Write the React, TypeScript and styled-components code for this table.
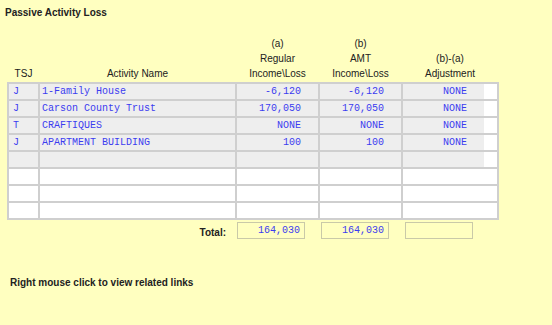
import React from "react";
import styled, { createGlobalStyle } from "styled-components";

const Global = createGlobalStyle`
  html, body { margin: 0; padding: 0; background: #ffffc0; }
  body { font-family: "Liberation Sans", Arial, sans-serif; font-size: 10px; color: #222; }
`;

const Page = styled.div`
  width: 552px;
  height: 325px;
  background: #ffffc0;
  box-sizing: border-box;
  padding: 7px 0 0 0;
  display: flex;
  flex-direction: column;
`;

const Title = styled.div`
  font-weight: bold;
  font-size: 10px;
  line-height: 12px;
  padding-left: 5px;
  height: 29px;
`;

const COLS = "29px 195px 81px 81px 94px";

const HeaderRow = styled.div`
  display: grid;
  grid-template-columns: ${COLS};
  column-gap: 2px;
  margin: 0 0 1px 7px;
  padding: 0 2px;
  align-items: end;
`;

const HeaderCell = styled.div`
  text-align: center;
  line-height: 15px;
  color: #222;
`;

const Table = styled.div`
  display: grid;
  grid-template-columns: ${COLS};
  gap: 2px;
  padding: 2px;
  margin-left: 7px;
  width: max-content;
  background: #cfcfcf;
`;

const Cell = styled.div<{ $filled: boolean; $align?: "left" | "right" | "center"; $pad?: number }>`
  height: 15px;
  line-height: 15px;
  background: ${(p) => (p.$filled ? "#eeeeee" : "#ffffff")};
  font-family: "Liberation Mono", "Courier New", monospace;
  font-size: 10px;
  color: #3c3cf0;
  text-align: ${(p) => p.$align ?? "left"};
  padding: ${(p) => (p.$align === "right" ? `0 ${p.$pad ?? 17}px 0 0` : `0 0 0 ${p.$pad ?? 2}px`)};
  box-sizing: border-box;
  white-space: pre;
  overflow: hidden;
`;

const AdjCell = styled.div`
  height: 15px;
  background: #ffffff;
  display: flex;
`;

const AdjInput = styled.div<{ $filled: boolean }>`
  width: 81px;
  height: 15px;
  line-height: 15px;
  background: ${(p) => (p.$filled ? "#eeeeee" : "#ffffff")};
  font-family: "Liberation Mono", "Courier New", monospace;
  font-size: 10px;
  color: #3c3cf0;
  text-align: right;
  padding-right: 17px;
  box-sizing: border-box;
`;

const TotalRow = styled.div`
  display: grid;
  grid-template-columns: ${COLS};
  column-gap: 2px;
  margin: 2px 0 0 7px;
  padding: 0 2px;
  align-items: center;
`;

const TotalLabel = styled.div`
  grid-column: 1 / span 2;
  text-align: right;
  padding-right: 9px;
  font-weight: bold;
  font-size: 10px;
  padding-top: 3px;
`;

const TotalBox = styled.div<{ $offset: number }>`
  width: 68px;
  height: 17px;
  margin-left: ${(p) => p.$offset}px;
  box-sizing: border-box;
  border: 1px solid #c9c9a8;
  font-family: "Liberation Mono", "Courier New", monospace;
  font-size: 10px;
  color: #3c3cf0;
  text-align: right;
  line-height: 15px;
  padding-right: 4px;
`;

const Footer = styled.div`
  font-weight: bold;
  font-size: 10px;
  padding-left: 10px;
  margin-top: 38px;
  line-height: 12px;
`;

type Row = { tsj: string; name: string; reg: string; amt: string; adj: string } | null;

const rows: { data: Row; filled: boolean }[] = [
  { data: { tsj: "J", name: "1-Family House", reg: "-6,120", amt: "-6,120", adj: "NONE" }, filled: true },
  { data: { tsj: "J", name: "Carson County Trust", reg: "170,050", amt: "170,050", adj: "NONE" }, filled: true },
  { data: { tsj: "T", name: "CRAFTIQUES", reg: "NONE", amt: "NONE", adj: "NONE" }, filled: true },
  { data: { tsj: "J", name: "APARTMENT BUILDING", reg: "100", amt: "100", adj: "NONE" }, filled: true },
  { data: null, filled: true },
  { data: null, filled: false },
  { data: null, filled: false },
  { data: null, filled: false },
];

export default function App() {
  return (
    <>
      <Global />
      <Page>
        <Title>Passive Activity Loss</Title>
        <HeaderRow>
          <HeaderCell>TSJ</HeaderCell>
          <HeaderCell>Activity Name</HeaderCell>
          <HeaderCell>
            (a)
            <br />
            Regular
            <br />
            Income\Loss
          </HeaderCell>
          <HeaderCell>
            (b)
            <br />
            AMT
            <br />
            Income\Loss
          </HeaderCell>
          <HeaderCell>
            (b)-(a)
            <br />
            Adjustment
          </HeaderCell>
        </HeaderRow>
        <Table>
          {rows.map((r, i) => (
            <React.Fragment key={i}>
              <Cell $filled={r.filled} $pad={4}>{r.data?.tsj ?? ""}</Cell>
              <Cell $filled={r.filled} $pad={2}>{r.data?.name ?? ""}</Cell>
              <Cell $filled={r.filled} $align="right">{r.data?.reg ?? ""}</Cell>
              <Cell $filled={r.filled} $align="right">{r.data?.amt ?? ""}</Cell>
              <AdjCell>
                <AdjInput $filled={r.filled}>{r.data?.adj ?? ""}</AdjInput>
              </AdjCell>
            </React.Fragment>
          ))}
        </Table>
        <TotalRow>
          <TotalLabel>Total:</TotalLabel>
          <TotalBox $offset={0}>164,030</TotalBox>
          <TotalBox $offset={1}>164,030</TotalBox>
          <TotalBox $offset={2}></TotalBox>
        </TotalRow>
        <Footer>Right mouse click to view related links</Footer>
      </Page>
    </>
  );
}
